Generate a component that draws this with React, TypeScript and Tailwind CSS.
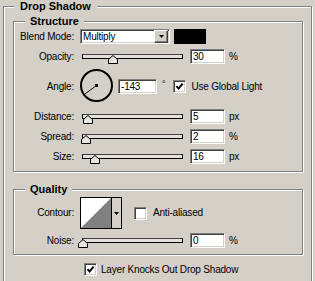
import React from "react";

const sunken =
  "bg-white border border-t-[#808080] border-l-[#808080] border-b-white border-r-white shadow-[inset_1px_1px_0_#404040,inset_-1px_-1px_0_#d4d0c8]";

function Label({ children }: { children: React.ReactNode }) {
  return <div className="w-[60px] text-right whitespace-nowrap">{children}</div>;
}

function Field({ value, w }: { value: string; w: number }) {
  return (
    <div
      className={`${sunken} h-[15px] pl-[2px] leading-[13px] whitespace-nowrap`}
      style={{ width: w }}
    >
      {value}
    </div>
  );
}

function Check() {
  return (
    <div className="w-[13px] h-[13px] shrink-0 bg-white border border-t-[#808080] border-l-[#808080] border-b-white border-r-white shadow-[inset_1px_1px_0_#404040,inset_-1px_-1px_0_#d4d0c8] flex items-center justify-center">
      <svg width="9" height="9" viewBox="0 0 9 9">
        <path d="M1.5 4.2 L3.6 6.6 L7.6 1.6" fill="none" stroke="#000" strokeWidth="1.9" />
      </svg>
    </div>
  );
}

function EmptyCheck() {
  return (
    <div className="w-[13px] h-[13px] shrink-0 bg-white border border-t-[#808080] border-l-[#808080] border-b-white border-r-white shadow-[inset_1px_1px_0_#404040,inset_-1px_-1px_0_#d4d0c8]" />
  );
}

function Slider({ thumb }: { thumb: number }) {
  return (
    <div className="relative w-[101px] h-[15px] shrink-0">
      <div className="absolute left-0 right-0 top-[5px] h-[5px] border border-black border-t-[#404040] bg-[#e4e1da]" />
      <svg
        className="absolute top-[6px]"
        style={{ left: thumb }}
        width="10"
        height="9"
        viewBox="0 0 10 9"
      >
        <path d="M5 0.5 L9.5 4.5 L9.5 8.5 L0.5 8.5 L0.5 4.5 Z" fill="#e8e6e0" stroke="#000" strokeWidth="1" />
      </svg>
    </div>
  );
}

function SliderRow({
  label,
  value,
  unit,
  thumb,
  mt,
}: {
  label: string;
  value: string;
  unit: string;
  thumb: number;
  mt: string;
}) {
  return (
    <div className={`flex items-center h-[15px] ${mt}`}>
      <Label>{label}</Label>
      <div className="ml-[8px]">
        <Slider thumb={thumb} />
      </div>
      <div className="ml-[7px]">
        <Field value={value} w={35} />
      </div>
      <div className="ml-[4px]">{unit}</div>
    </div>
  );
}

export default function App() {
  return (
    <div className="w-[315px] h-[281px] bg-[#d4d0c8] overflow-hidden font-['Liberation_Sans',Arial,sans-serif] text-[10px] leading-[12px] text-black tracking-[-0.2px]">
      <fieldset className="ml-[3px] w-[309px] h-[300px] border border-[#808080] shadow-[inset_1px_1px_0_#fff,1px_1px_0_#fff]">
        <legend className="ml-[10px] px-[6px] bg-[#d4d0c8] text-[11px] font-bold leading-[12px] tracking-normal">
          Drop Shadow
        </legend>

        {/* Structure */}
        <fieldset className="mt-[3px] ml-[9px] w-[290px] pb-[7px] border border-[#808080] shadow-[inset_1px_1px_0_#fff,1px_1px_0_#fff]">
          <legend className="ml-[11px] px-[5px] bg-[#d4d0c8] text-[11px] font-bold leading-[12px] tracking-normal">
            Structure
          </legend>

          <div className="flex items-center h-[15px] mt-[2px]">
            <Label>Blend Mode:</Label>
            <div className={`${sunken} ml-[6px] w-[90px] h-[15px] flex items-center`}>
              <div className="flex-1 pl-[2px] leading-[13px]">Multiply</div>
              <div className="w-[14px] h-[13px] mr-[1px] bg-[#d4d0c8] border border-t-white border-l-white border-b-[#404040] border-r-[#404040] shadow-[inset_-1px_-1px_0_#808080] flex items-center justify-center">
                <svg width="5" height="3" viewBox="0 0 5 3">
                  <path d="M0 0 L5 0 L2.5 3 Z" fill="#000" />
                </svg>
              </div>
            </div>
            <div className="ml-[4px] w-[32px] h-[15px] bg-black" />
          </div>

          <SliderRow mt="mt-[5px]" label="Opacity:" value="30" unit="%" thumb={26} />

          <div className="flex items-start h-[33px] mt-[5px]">
            <div className="flex items-center h-[15px] mt-[10px]">
              <Label>Angle:</Label>
            </div>
            <svg className="ml-[6px] shrink-0" width="33" height="33" viewBox="0 0 33 33">
              <circle cx="16.5" cy="16.5" r="15.5" fill="none" stroke="#000" strokeWidth="2" />
              <line x1="16.5" y1="16.5" x2="4.5" y2="25.3" stroke="#000" strokeWidth="1" />
              <rect x="15" y="15" width="3" height="3" fill="#000" />
            </svg>
            <div className="ml-[5px] mt-[10px]">
              <Field value="-143" w={39} />
            </div>
            <div className="ml-[5px] mt-[9px] text-[9px]">°</div>
            <div className="flex items-center h-[15px] mt-[10px] ml-[8px]">
              <Check />
              <div className="ml-[5px] whitespace-nowrap">Use Global Light</div>
            </div>
          </div>

          <SliderRow mt="mt-[7px]" label="Distance:" value="5" unit="px" thumb={1} />
          <SliderRow mt="mt-[5px]" label="Spread:" value="2" unit="%" thumb={-1} />
          <SliderRow mt="mt-[5px]" label="Size:" value="16" unit="px" thumb={8} />
        </fieldset>

        {/* Quality */}
        <fieldset className="mt-[11px] ml-[9px] w-[290px] pb-[6px] border border-[#808080] shadow-[inset_1px_1px_0_#fff,1px_1px_0_#fff]">
          <legend className="ml-[11px] px-[5px] bg-[#d4d0c8] text-[11px] font-bold leading-[12px] tracking-normal">
            Quality
          </legend>

          <div className="flex items-center h-[32px] mt-[2px]">
            <Label>Contour:</Label>
            <div className="ml-[6px] flex h-[32px] w-[42px] border border-black">
              <svg width="30" height="30" viewBox="0 0 30 30" className="shrink-0">
                <rect width="30" height="30" fill="#fff" />
                <path d="M0 30 L30 0 L30 30 Z" fill="#808080" />
              </svg>
              <div className="flex-1 border-l border-black bg-[#d4d0c8] flex items-center justify-center">
                <svg width="5" height="3" viewBox="0 0 5 3">
                  <path d="M0 0 L5 0 L2.5 3 Z" fill="#000" />
                </svg>
              </div>
            </div>
            <div className="ml-[12px] flex items-center">
              <EmptyCheck />
              <div className="ml-[6px] whitespace-nowrap">Anti-aliased</div>
            </div>
          </div>

          <SliderRow mt="mt-[4px]" label="Noise:" value="0" unit="%" thumb={-4} />
        </fieldset>

        <div className="flex items-center h-[13px] mt-[8px] ml-[80px]">
          <Check />
          <div className="ml-[4px] whitespace-nowrap">Layer Knocks Out Drop Shadow</div>
        </div>
      </fieldset>
    </div>
  );
}
